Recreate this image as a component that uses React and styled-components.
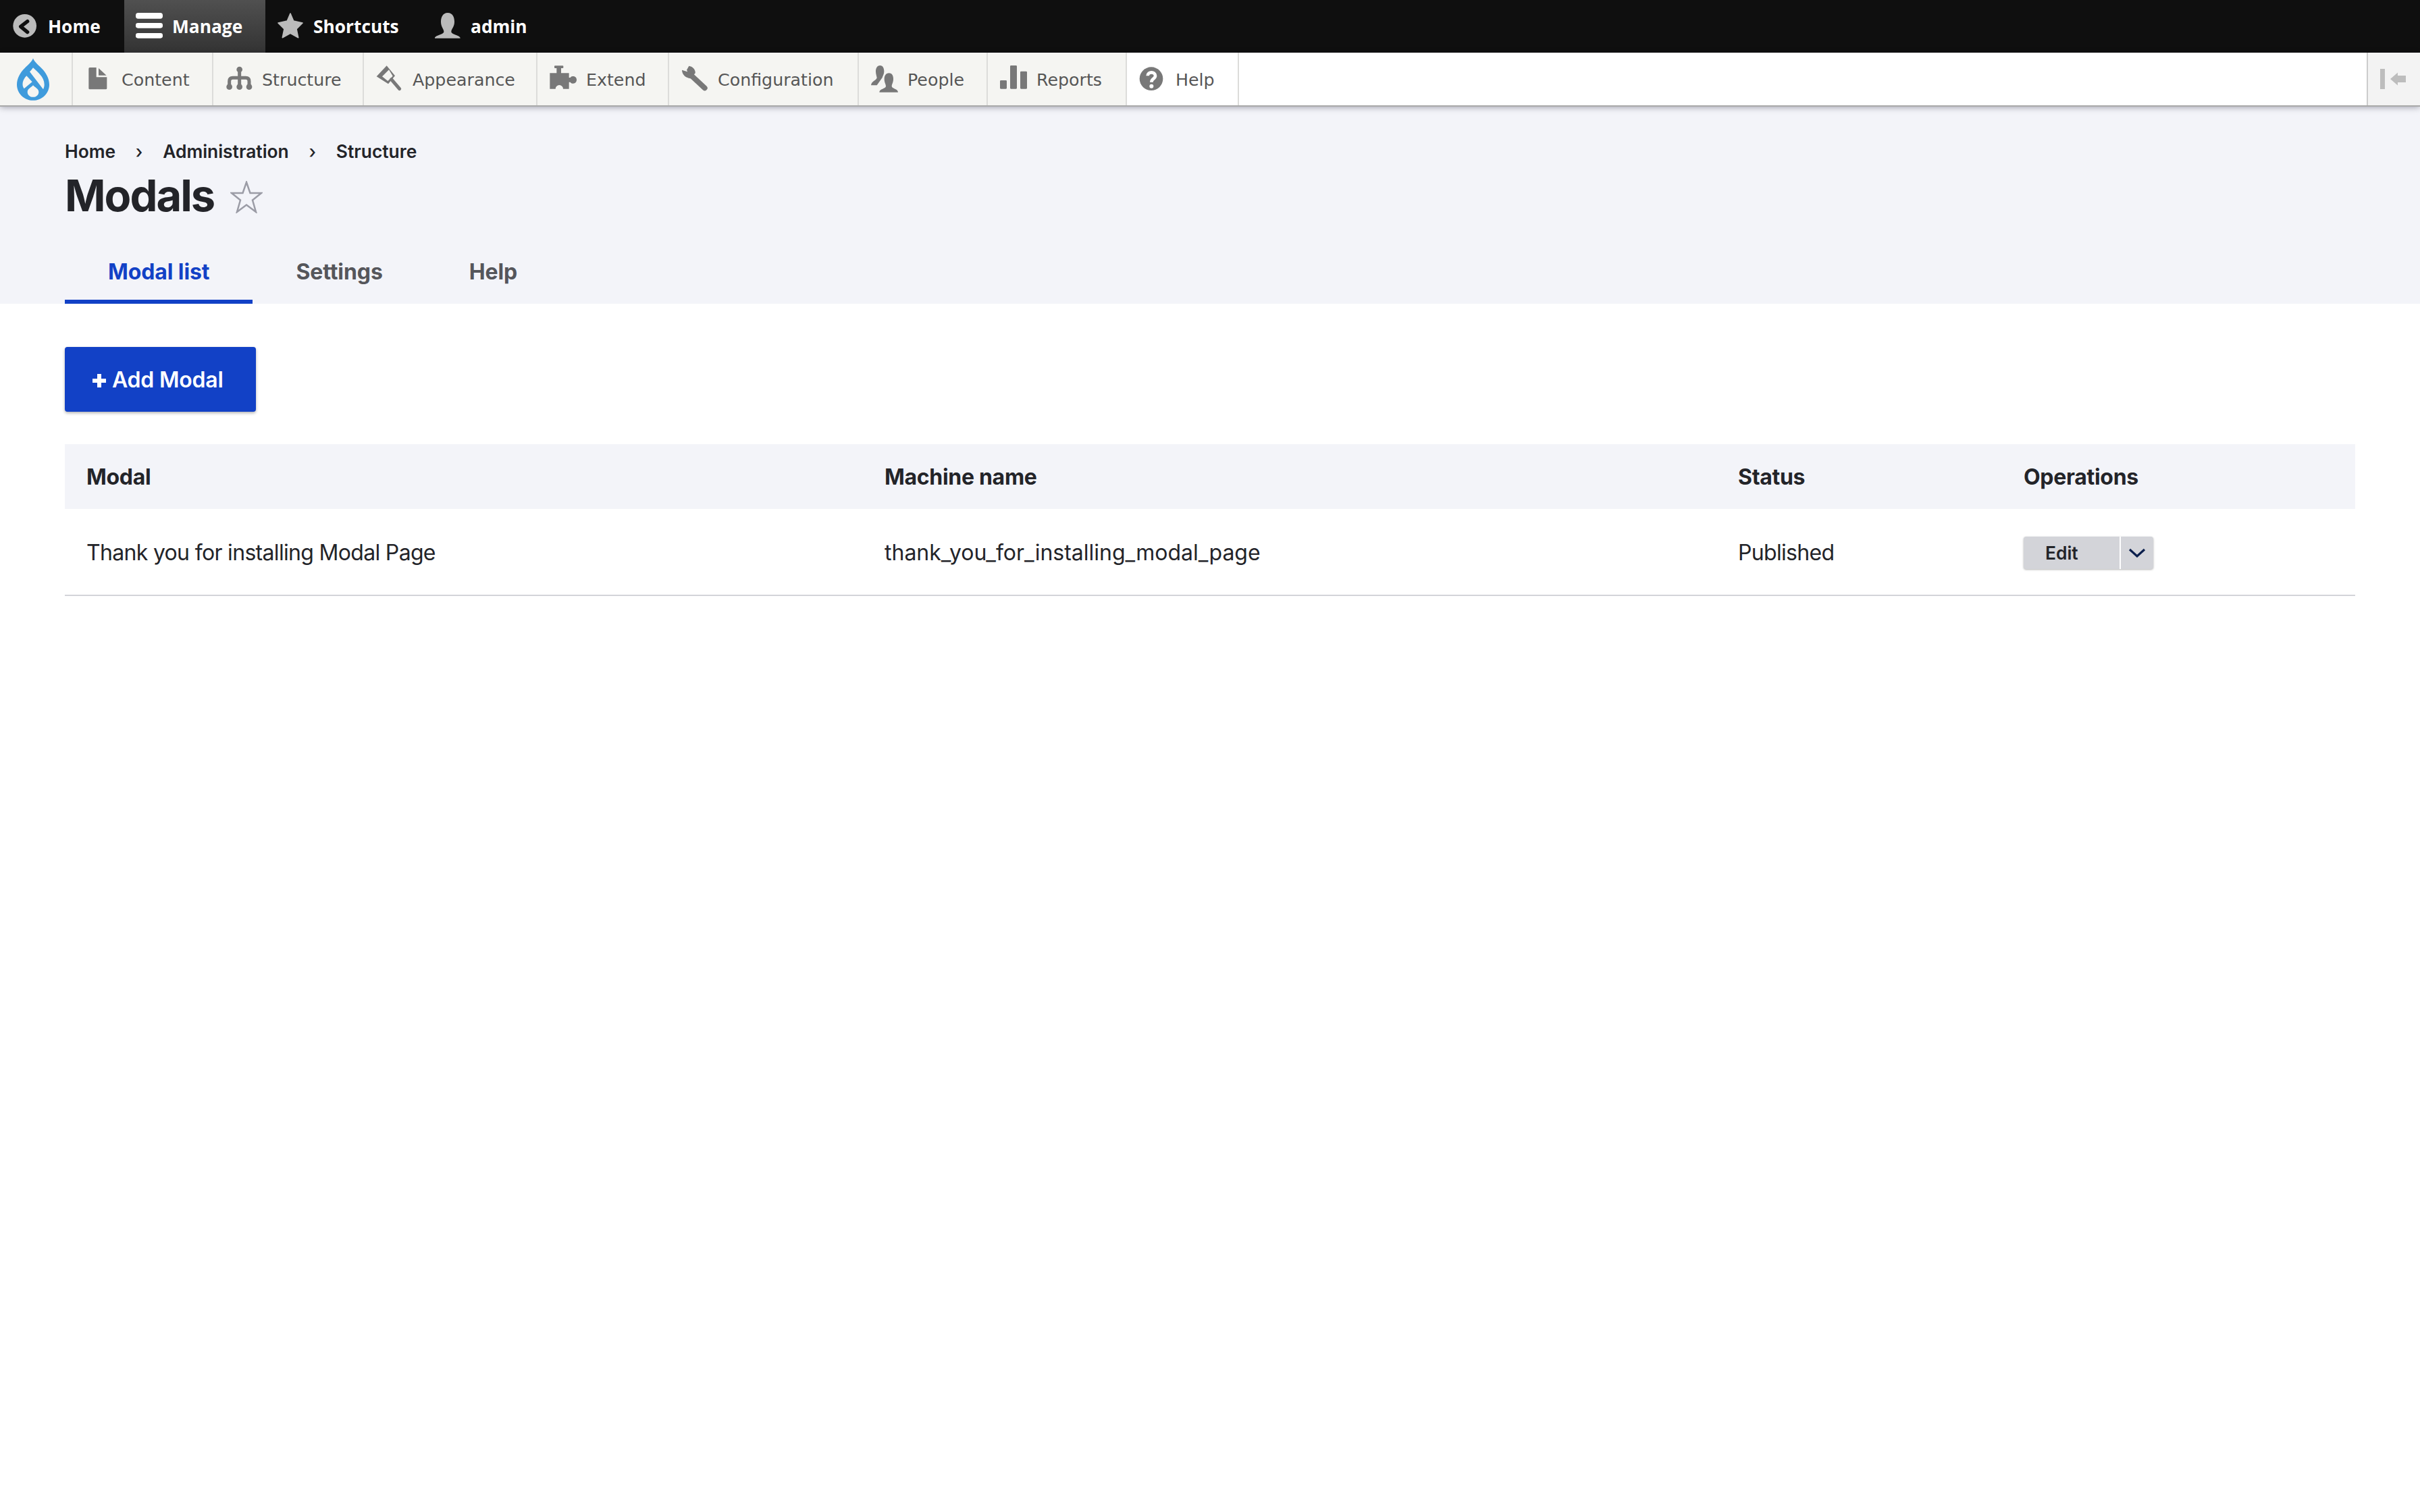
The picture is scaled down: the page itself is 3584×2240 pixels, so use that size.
import React from "react";
import styled, { createGlobalStyle } from "styled-components";

const Global = createGlobalStyle`
  html, body { margin: 0; padding: 0; background: #fff; }
  body { font-family: Inter, "Liberation Sans", sans-serif; color: #232429; }
  #root { min-height: 2240px; }
`;

const TopBar = styled.nav`
  display: flex;
  height: 78px;
  background: #0f0f0f;
`;
const TopLink = styled.a`
  display: flex;
  align-items: center;
  gap: 14px;
  box-sizing: border-box;
  width: ${(p) => p.$w}px;
  padding-left: 17px;
  color: #fff;
  font: 700 26.3px "Open Sans", sans-serif;
  background: ${(p) => (p.$active ? "linear-gradient(#505050, #333)" : "transparent")};
`;
const Tray = styled.nav`
  position: relative;
  display: flex;
  height: 78px;
  background: #fff;
  box-shadow: 0 2px 0 #a9a9a9, 0 3px 9px rgba(0, 0, 30, 0.35);
`;
const LogoCell = styled.a`
  display: flex;
  align-items: center;
  box-sizing: border-box;
  width: 108px;
  padding-left: 25px;
  background: #f5f5f2;
  border-right: 2px solid #dcdcda;
`;
const TrayLink = styled.a`
  display: flex;
  align-items: center;
  gap: 15px;
  box-sizing: border-box;
  width: ${(p) => p.$w}px;
  padding-left: 18px;
  color: #565656;
  font: 400 25.3px "DejaVu Sans", sans-serif;
  background: ${(p) => (p.$plain ? "#fff" : "#f5f5f2")};
  border-right: 2px solid #dcdcda;
`;
const TrayLabel = styled.span`
  padding-top: 2px;
  margin-left: -1px;
`;
const Toggle = styled.button`
  display: flex;
  align-items: center;
  margin-left: auto;
  box-sizing: border-box;
  width: 79px;
  padding: 0 0 0 18px;
  background: #f3f3f3;
  border: 0;
  border-left: 2px solid #cccccc;
`;
const Icon = styled.svg`
  flex: none;
  display: block;
  width: 40px;
  height: 40px;
`;
const PageHead = styled.header`
  height: 294px;
  box-sizing: border-box;
  padding: 52px 96px 0;
  background: #f3f4f9;
`;
const Crumbs = styled.ol`
  display: flex;
  align-items: center;
  height: 32px;
  margin: 0;
  padding: 0;
  list-style: none;
  font-size: 26.4px;
  font-weight: 600;
`;
const CrumbSep = styled.li`
  width: 70px;
  text-align: center;
  font-weight: 500;
`;
const TitleRow = styled.div`
  display: flex;
  align-items: center;
  gap: 24px;
  height: 72px;
  margin-top: 14px;
`;
const Title = styled.h1`
  margin: 0;
  font-size: 65px;
  line-height: 72px;
  font-weight: 700;
  letter-spacing: -2px;
`;
const Star = styled.svg`
  flex: none;
  margin-top: 3px;
`;
const Tabs = styled.div`
  display: flex;
  height: 93px;
  margin-top: 31px;
`;
const Tab = styled.a`
  display: flex;
  align-items: center;
  box-sizing: border-box;
  padding: 4px 64px 0;
  font-size: 32px;
  font-weight: 700;
  letter-spacing: -0.1px;
  color: ${(p) => (p.$active ? "#1241c6" : "#55565b")};
  border-bottom: 6px solid ${(p) => (p.$active ? "#1241c6" : "transparent")};
`;
const Main = styled.main`
  padding: 64px 96px 0;
`;
const AddButton = styled.a`
  display: inline-flex;
  align-items: center;
  gap: 9px;
  box-sizing: border-box;
  width: 283px;
  height: 96px;
  padding-left: 41px;
  border-radius: 4px;
  background: #1241c6;
  color: #fff;
  font-size: 32px;
  font-weight: 600;
  letter-spacing: -0.2px;
  box-shadow: 0 2px 4px rgba(0, 0, 0, 0.3);
`;
const Plus = styled.svg`
  flex: none;
  margin-top: 3px;
`;
const Table = styled.table`
  width: 3392px;
  margin-top: 48px;
  border-collapse: collapse;
  table-layout: fixed;
  font-size: 32px;
`;
const HeadCell = styled.th`
  height: 96px;
  padding: 0 32px;
  background: #f3f4f9;
  text-align: left;
  font-weight: 700;
  letter-spacing: -0.3px;
`;
const Row = styled.tr`
  border-bottom: 2px solid #d3d4d9;
`;
const Cell = styled.td`
  height: 125px;
  padding: 2px 32px 0;
  letter-spacing: ${(p) => (p.$tight ? "-0.68px" : "0")};
`;
const Split = styled.div`
  display: inline-flex;
  height: 48px;
  width: 192px;
  vertical-align: middle;
  border-radius: 4px;
  background: #d3d4d9;
  box-shadow: 0 1px 3px rgba(0, 0, 0, 0.3);
`;
const EditLabel = styled.a`
  display: flex;
  align-items: center;
  box-sizing: border-box;
  width: 144px;
  padding-left: 32px;
  font-size: 26.4px;
  font-weight: 600;
  border-right: 2px solid #fff;
`;
const Caret = styled.span`
  display: flex;
  flex: 1;
  align-items: center;
  justify-content: center;
`;

const I = ({ children, fill = "#787878" }) => (
  <Icon viewBox="0 0 120 120" fill={fill}>{children}</Icon>
);

const icons = {
  home: (
    <I fill="#bbbbbb">
      <circle cx="59" cy="58" r="52" />
      <path d="M71 38 41 61 71 86" fill="none" stroke="#0f0f0f" strokeWidth="16" strokeLinecap="round" strokeLinejoin="round" />
    </I>
  ),
  manage: (
    <I fill="#fff">
      <rect x="0" y="0" width="120" height="26" rx="11" />
      <rect x="0" y="45" width="120" height="23" rx="10" />
      <rect x="0" y="90" width="120" height="23" rx="10" />
    </I>
  ),
  star: (
    <I fill="#bbbbbb">
      <path d="M60 3 74 36 114 45 87 72 95 110 60 91 25 110 33 72 6 45 46 36Z" stroke="#bbbbbb" strokeWidth="5" strokeLinejoin="round" />
    </I>
  ),
  user: (
    <I fill="#bbbbbb">
      <path d="M60 0C83 0 90 20 90 40 90 63 76 73 76 83 76 98 116 98 116 113H3C3 98 43 98 43 83 43 73 30 63 30 40 30 20 38 0 60 0Z" />
    </I>
  ),
  content: (
    <I>
      <path d="M21 9H50V52H97V101Q97 106 92 106H21Q16 106 16 101V14Q16 9 21 9Z" />
      <path d="M60 12 95 44H60Z" />
    </I>
  ),
  structure: (
    <I>
      <circle cx="62" cy="18" r="13" />
      <circle cx="17" cy="95" r="13" />
      <circle cx="62" cy="95" r="13" />
      <circle cx="105" cy="95" r="13" />
      <path d="M17 95V70Q17 55 32 55H90Q105 55 105 70V95M62 18V95" fill="none" stroke="#787878" strokeWidth="15" />
    </I>
  ),
  appearance: (
    <I>
      <path fillRule="evenodd" d="M47 1 84 46 54 82 2 49ZM57 19 27 49 52 69 74 47Z" />
      <path d="M68 62 104 104" fill="none" stroke="#787878" strokeWidth="15" strokeLinecap="round" />
    </I>
  ),
  extend: (
    <I>
      <path d="M1 34H31V12H24Q21 12 21 9V4Q21 1 24 1H58Q61 1 61 4V9Q61 12 58 12H51V34H86V54H92C96 48 100 48 105 48 114 48 120 55 120 64S114 80 105 80C100 80 96 80 92 74H86V104H60A17 17 0 1 0 26 104H1Z" />
    </I>
  ),
  config: (
    <I>
      <path d="M34 2 24 20 28 28 3 20C3 40 20 56 42 58L62 34C64 18 50 4 34 2Z" />
      <path d="M46 46 104 100" fill="none" stroke="#787878" strokeWidth="24" strokeLinecap="round" />
    </I>
  ),
  people: (
    <I>
      <path d="M40 0C53 0 58 13 58 26 58 38 52 46 50 54L26 88H0C2 70 22 68 26 55 25 46 21 38 21 26 21 13 27 0 40 0Z" />
      <path d="M80 34C94 34 99 47 99 60 99 76 92 84 92 92 92 103 120 103 120 119H37C37 103 66 103 66 92 66 84 59 76 59 60 59 47 65 34 80 34Z" stroke="#f5f5f2" strokeWidth="4" paintOrder="stroke" />
    </I>
  ),
  reports: (
    <I>
      <rect x="0" y="66" width="30" height="38" rx="4" />
      <rect x="45" y="0" width="30" height="104" rx="4" />
      <rect x="90" y="26" width="30" height="78" rx="4" />
    </I>
  ),
  help: (
    <I>
      <circle cx="54" cy="59" r="52" />
      <path d="M38 46C38 26 72 26 72 46 72 60 55 58 55 74" fill="none" stroke="#fff" strokeWidth="14" />
      <circle cx="55" cy="92" r="9" fill="#fff" />
    </I>
  ),
};

const topLinks = [
  { label: "Home", icon: "home", w: 184 },
  { label: "Manage", icon: "manage", w: 209, active: true },
  { label: "Shortcuts", icon: "star", w: 233 },
  { label: "admin", icon: "user", w: 170 },
];
const trayLinks = [
  { label: "Content", icon: "content", w: 208 },
  { label: "Structure", icon: "structure", w: 223 },
  { label: "Appearance", icon: "appearance", w: 257 },
  { label: "Extend", icon: "extend", w: 195 },
  { label: "Configuration", icon: "config", w: 281 },
  { label: "People", icon: "people", w: 191 },
  { label: "Reports", icon: "reports", w: 206 },
  { label: "Help", icon: "help", w: 166, plain: true },
];

export default function App() {
  return (
    <>
      <Global />
      <TopBar>
        {topLinks.map((l) => (
          <TopLink key={l.label} $w={l.w} $active={l.active}>
            {icons[l.icon]}
            {l.label}
          </TopLink>
        ))}
      </TopBar>
      <Tray>
        <LogoCell>
          <svg width="48" height="63" viewBox="75 30 144 188">
            <path fill="#3f9bdc" d="M147 30C150 42 165 55 185 75 205 95 219 120 219 147 219 186 187 218 147 218 107 218 75 186 75 147 75 120 89 95 109 75 129 55 144 42 147 30Z" />
            <path fill="#f5f5f2" d="M147 72C165 90 197 112 197 147 197 155 195 162 192 168L132 90C138 84 143 78 147 72Z" />
            <path fill="#f5f5f2" d="M118 108 143 135 107 165C95 150 100 125 118 108Z" />
            <path fill="#f5f5f2" d="M147 150C155 160 172 165 172 180 172 194 160 203 147 203 134 203 122 194 122 180 122 165 139 160 147 150Z" />
          </svg>
        </LogoCell>
        {trayLinks.map((l) => (
          <TrayLink key={l.label} $w={l.w} $plain={l.plain}>
            {icons[l.icon]}
            <TrayLabel>{l.label}</TrayLabel>
          </TrayLink>
        ))}
        <Toggle aria-label="Collapse">
          <svg width="40" height="30" viewBox="0 0 40 30" fill="#bdbdbd">
            <rect x="0" y="0" width="7" height="30" />
            <path d="M15 15 26 5.5V10H38V20H26V24.5Z" />
          </svg>
        </Toggle>
      </Tray>
      <PageHead>
        <Crumbs>
          <li>Home</li>
          <CrumbSep>›</CrumbSep>
          <li>Administration</li>
          <CrumbSep>›</CrumbSep>
          <li>Structure</li>
        </Crumbs>
        <TitleRow>
          <Title>Modals</Title>
          <Star width="48" height="48" viewBox="0 0 48 48" fill="none" stroke="#9b9ca6" strokeWidth="2.5">
            <path d="M24 2 29.5 18 46 18 33 28.5 38 46 24 35.5 10 46 15 28.5 2 18 18.5 18Z" />
          </Star>
        </TitleRow>
        <Tabs>
          <Tab $active>Modal list</Tab>
          <Tab>Settings</Tab>
          <Tab>Help</Tab>
        </Tabs>
      </PageHead>
      <Main>
        <AddButton>
          <Plus width="20" height="20" viewBox="0 0 20 20" fill="#fff">
            <path d="M7 0H13V7H20V13H13V20H7V13H0V7H7Z" />
          </Plus>
          <span>Add Modal</span>
        </AddButton>
        <Table>
          <colgroup>
            <col width="1182" />
            <col width="1264" />
            <col width="423" />
            <col width="523" />
          </colgroup>
          <thead>
            <tr>
              <HeadCell>Modal</HeadCell>
              <HeadCell>Machine name</HeadCell>
              <HeadCell>Status</HeadCell>
              <HeadCell>Operations</HeadCell>
            </tr>
          </thead>
          <tbody>
            <Row>
              <Cell $tight>Thank you for installing Modal Page</Cell>
              <Cell>thank_you_for_installing_modal_page</Cell>
              <Cell $tight>Published</Cell>
              <Cell>
                <Split>
                  <EditLabel>Edit</EditLabel>
                  <Caret>
                    <svg width="26" height="14" viewBox="0 0 26 14" fill="none" stroke="#0b1f4d" strokeWidth="3.2">
                      <path d="M2 2 13 12 24 2" />
                    </svg>
                  </Caret>
                </Split>
              </Cell>
            </Row>
          </tbody>
        </Table>
      </Main>
    </>
  );
}
